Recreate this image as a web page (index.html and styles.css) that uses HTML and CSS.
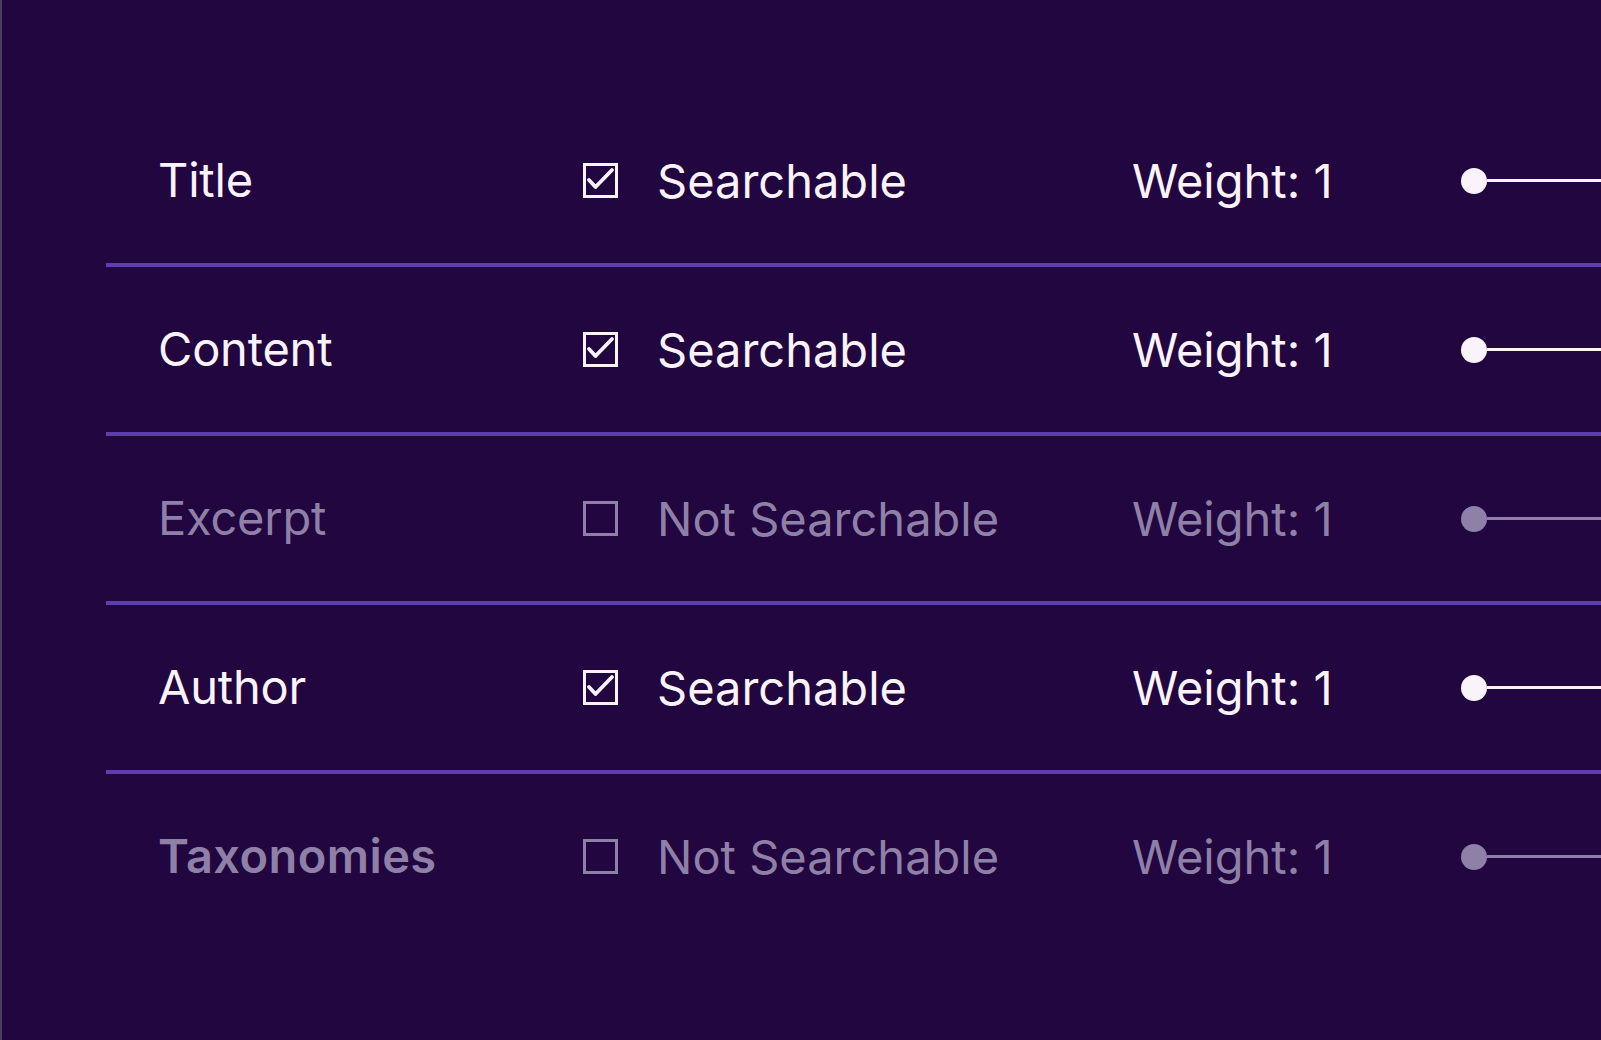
FILE: index.html
```html
<!DOCTYPE html>
<html lang="en">
<head>
<meta charset="utf-8">
<title>Search fields</title>
<link rel="stylesheet" href="styles.css">
</head>
<body>
<div class="page">
  <div class="fields">
    <div class="row">
      <div class="label">Title</div>
      <div class="search">
        <svg class="box" viewBox="0 0 35 35" width="35" height="35"><rect x="1.5" y="1.5" width="32" height="32" fill="none" stroke="currentColor" stroke-width="3"/><polyline points="6,17 12.5,24 29,7" fill="none" stroke="currentColor" stroke-width="3.8" stroke-linecap="round" stroke-linejoin="round"/></svg>
        <span>Searchable</span>
      </div>
      <div class="weight">Weight: 1</div>
      <div class="slider"><span class="knob"></span><span class="track"></span></div>
    </div>
    <div class="row">
      <div class="label">Content</div>
      <div class="search">
        <svg class="box" viewBox="0 0 35 35" width="35" height="35"><rect x="1.5" y="1.5" width="32" height="32" fill="none" stroke="currentColor" stroke-width="3"/><polyline points="6,17 12.5,24 29,7" fill="none" stroke="currentColor" stroke-width="3.8" stroke-linecap="round" stroke-linejoin="round"/></svg>
        <span>Searchable</span>
      </div>
      <div class="weight">Weight: 1</div>
      <div class="slider"><span class="knob"></span><span class="track"></span></div>
    </div>
    <div class="row off">
      <div class="label">Excerpt</div>
      <div class="search">
        <svg class="box" viewBox="0 0 35 35" width="35" height="35"><rect x="1.5" y="1.5" width="32" height="32" fill="none" stroke="currentColor" stroke-width="3"/></svg>
        <span>Not Searchable</span>
      </div>
      <div class="weight">Weight: 1</div>
      <div class="slider"><span class="knob"></span><span class="track"></span></div>
    </div>
    <div class="row">
      <div class="label">Author</div>
      <div class="search">
        <svg class="box" viewBox="0 0 35 35" width="35" height="35"><rect x="1.5" y="1.5" width="32" height="32" fill="none" stroke="currentColor" stroke-width="3"/><polyline points="6,17 12.5,24 29,7" fill="none" stroke="currentColor" stroke-width="3.8" stroke-linecap="round" stroke-linejoin="round"/></svg>
        <span>Searchable</span>
      </div>
      <div class="weight">Weight: 1</div>
      <div class="slider"><span class="knob"></span><span class="track"></span></div>
    </div>
    <div class="row off">
      <div class="label bold">Taxonomies</div>
      <div class="search">
        <svg class="box" viewBox="0 0 35 35" width="35" height="35"><rect x="1.5" y="1.5" width="32" height="32" fill="none" stroke="currentColor" stroke-width="3"/></svg>
        <span>Not Searchable</span>
      </div>
      <div class="weight">Weight: 1</div>
      <div class="slider"><span class="knob"></span><span class="track"></span></div>
    </div>
  </div>
</div>
</body>
</html>
```
FILE: styles.css
```css
html, body {
  margin: 0;
  padding: 0;
  height: 100%;
  background: #22063f;
}

.page {
  box-sizing: border-box;
  height: 1040px;
  border-left: 2px solid #4c3c62;
  padding: 98px 0 0 104px;
  overflow: hidden;
  font-family: Inter, "Noto Sans", "Liberation Sans", sans-serif;
  color: #fbf3fb;
}

.fields {
  display: flex;
  flex-direction: column;
}

.row {
  display: grid;
  grid-template-columns: 425px 549px 329px 1fr;
  align-items: center;
  height: 165px;
  padding-left: 52px;
  border-bottom: 4px solid #5e3db0;
}

.row:last-child {
  border-bottom: none;
}

.off {
  color: #8f80a8;
}

.label {
  font-size: 47px;
  line-height: 1;
  margin-top: -3px;
  letter-spacing: -0.2px;
}

.label.bold {
  font-weight: 600;
  letter-spacing: 0.4px;
}

.search {
  display: flex;
  align-items: center;
  gap: 39px;
  font-size: 47px;
  line-height: 1;
}

.box {
  display: block;
  flex: none;
}

.weight {
  font-size: 47px;
  line-height: 1;
}

.slider {
  display: flex;
  align-items: center;
}

.knob {
  width: 26px;
  height: 26px;
  border-radius: 50%;
  background: currentColor;
  flex: none;
}

.track {
  flex: 1;
  height: 3px;
  background: currentColor;
}
```
